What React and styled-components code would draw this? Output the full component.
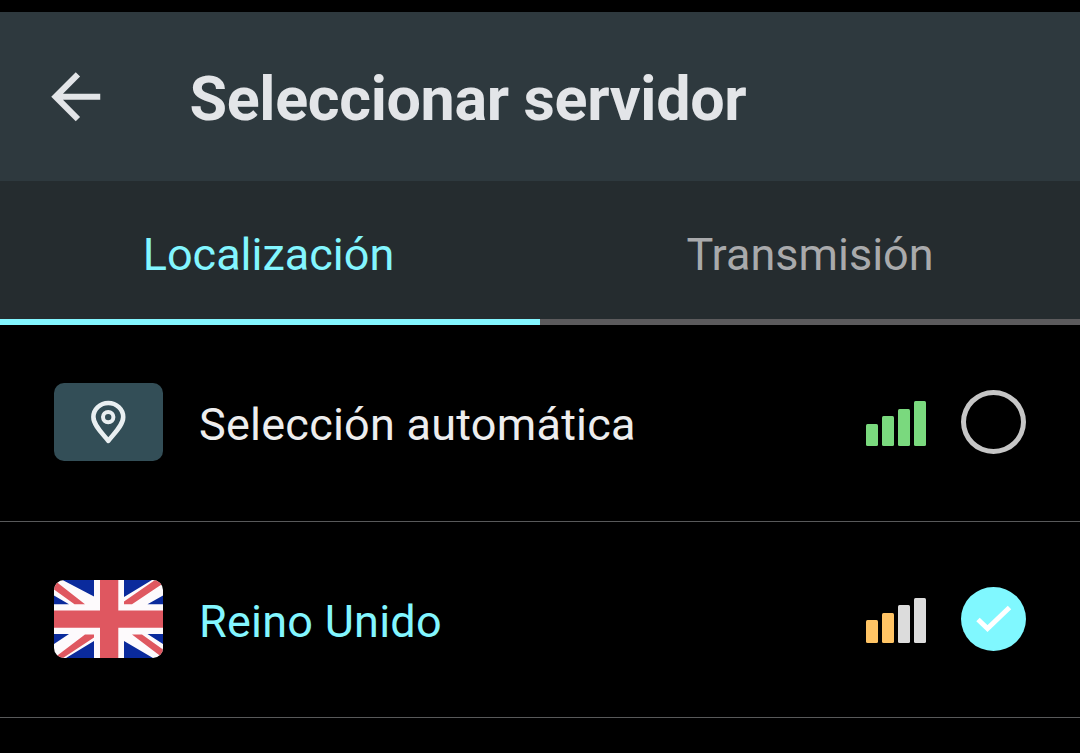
import { createContext, useContext, useState } from "react";
import styled, { createGlobalStyle } from "styled-components";

const GlobalStyle = createGlobalStyle`
  * {
    box-sizing: border-box;
  }

  body {
    margin: 0;
    background: #000;
    font-family: Roboto, "Noto Sans", sans-serif;
    overflow: hidden;
  }

  button {
    border: none;
    background: none;
    padding: 0;
    font: inherit;
    color: inherit;
  }

  svg {
    display: block;
  }
`;

const Screen = styled.div`
  display: flex;
  flex-direction: column;
  height: 753px;
  padding-top: 12px;
  overflow: hidden;
`;

const Header = styled.header`
  display: flex;
  align-items: center;
  flex: 0 0 169px;
  padding: 0 38.5px;
  background: #2e393e;
`;

const BackButton = styled.button`
  width: 73.5px;
  height: 73.5px;
`;

const Title = styled.h1`
  margin: 5px 0 0 77.5px;
  font-size: 61px;
  line-height: 72px;
  font-weight: 700;
  letter-spacing: -0.33px;
  color: #e3e5e8;
  white-space: nowrap;
`;

const TabBar = styled.nav`
  display: grid;
  grid-template-columns: 1fr 1fr;
  flex: 0 0 144px;
  background: #252c2f;
`;

const Tab = styled.button`
  padding-top: 10px;
  padding-right: ${(props) => (props.$active ? 3 : 0)}px;
  font-size: 45px;
  line-height: 52px;
  color: ${(props) => (props.$active ? "#83f6ff" : "#a9aaac")};
  border-bottom: 6px solid ${(props) => (props.$active ? "#83f6ff" : "#5c5b5d")};
`;

const List = styled.ul`
  margin: 0;
  padding: 0;
  list-style: none;
`;

const Row = styled.li`
  display: flex;
  align-items: center;
  height: ${(props) => props.$height}px;
  padding: 0 54px 2px;
  border-bottom: 1px solid #58595a;
`;

const Badge = styled.div`
  flex: 0 0 109px;
  height: 78px;
  border-radius: 10px;
  overflow: hidden;
  background: ${(props) => props.$color};
`;

const Label = styled.span`
  flex: 1;
  margin-left: 36px;
  padding-top: 6px;
  font-size: 45px;
  line-height: 52px;
  letter-spacing: 0.24px;
  color: ${(props) => (props.$selected ? "#83f6ff" : "#ededee")};
`;

const Bars = styled.div`
  display: flex;
  align-items: flex-end;
  justify-content: space-between;
  width: 61px;
  height: 45px;
  margin: 3px 34.5px 0 0;
`;

const Bar = styled.span`
  width: 12px;
  height: ${(props) => props.$height}px;
  border-radius: 1.5px;
  background: ${(props) => props.$color};
`;

const Radio = styled.span`
  display: flex;
  align-items: center;
  justify-content: center;
  width: 65px;
  height: 64px;
  border-radius: 50%;
  border: ${(props) => (props.$selected ? "none" : "5px solid #c6c6c6")};
  background: ${(props) => (props.$selected ? "#80f8ff" : "transparent")};
`;

const BAR_HEIGHTS = [22.5, 30, 37.5, 45];

const SelectionContext = createContext();

function ArrowIcon() {
  return (
    <svg width="73.5" height="73.5" viewBox="0 0 24 24" fill="#e3e5e8">
      <path d="M20 11H7.83l5.59-5.59L12 4l-8 8 8 8 1.41-1.41L7.83 13H20v-2z" />
    </svg>
  );
}

function PinIcon() {
  return (
    <svg width="109" height="78" viewBox="0 0 109 78" fill="none" stroke="#e9eff1">
      <path
        d="M54.3 57.8C49 50.8 39.4 42.500 39.4 34a14.900 14 0 0 1 29.800 0C69.200 42.500 59.600 50.8 54.3 57.8Z"
        strokeWidth="4.6"
        strokeLinejoin="round"
      />
      <circle cx="54.2" cy="34.1" r="5.2" strokeWidth="4" />
    </svg>
  );
}

function UkFlag() {
  return (
    <svg width="109" height="78" viewBox="0 0 109 78">
      <path
        fill="#0a2a9c"
        d="M8.500 0H40V16.500ZM0 15.500L15 24.300H0ZM70 0H98L70 17ZM109 15.500V24.300H93.500ZM0 54H15L0 64ZM40 61V78H12ZM93.500 54H109V64ZM70 61V78H99Z"
      />
      <path
        fill="#df5760"
        d="M0 0L31 24.300H20.500L0 9.500ZM70 21.500L101 0H109V3.500L78 24.300H70ZM31 54.500H40V57.500L9 78H0ZM78 54.500H88L109 69.500V78Z"
      />
      <path fill="#df5760" d="M0 30.500H46V0H64.300V30.500H109V47.800H64.300V78H46V47.800H0Z" />
    </svg>
  );
}

function CheckIcon() {
  return (
    <svg width="65" height="64" viewBox="0 0 65 64" fill="none">
      <path d="M17 32.500L26.500 41.500L48.500 20.500" stroke="#fff" strokeWidth="5" />
    </svg>
  );
}

function Signal({ level, color }) {
  return (
    <Bars>
      {BAR_HEIGHTS.map((height, i) => (
        <Bar key={height} $height={height} $color={i < level ? color : "#dcdcdc"} />
      ))}
    </Bars>
  );
}

function ServerRow({ server }) {
  const { selected, setSelected } = useContext(SelectionContext);
  const isSelected = selected === server.id;

  return (
    <Row $height={server.height} onClick={() => setSelected(server.id)}>
      <Badge $color={server.badge}>{server.icon}</Badge>
      <Label $selected={isSelected}>{server.name}</Label>
      <Signal level={server.level} color={server.color} />
      <Radio $selected={isSelected}>{isSelected && <CheckIcon />}</Radio>
    </Row>
  );
}

const servers = [
  {
    id: "auto",
    name: "Selección automática",
    icon: <PinIcon />,
    badge: "#334e57",
    level: 4,
    color: "#7ad97e",
    height: 197,
  },
  {
    id: "uk",
    name: "Reino Unido",
    icon: <UkFlag />,
    badge: "#fdfafc",
    level: 2,
    color: "#ffc465",
    height: 196,
  },
];

export default function App() {
  const [tab, setTab] = useState("Localización");
  const [selected, setSelected] = useState("uk");

  return (
    <SelectionContext.Provider value={{ selected, setSelected }}>
      <GlobalStyle />
      <Screen>
        <Header>
          <BackButton aria-label="Atrás">
            <ArrowIcon />
          </BackButton>
          <Title>Seleccionar servidor</Title>
        </Header>
        <TabBar>
          {["Localización", "Transmisión"].map((name) => (
            <Tab key={name} $active={tab === name} onClick={() => setTab(name)}>
              {name}
            </Tab>
          ))}
        </TabBar>
        <List>
          {servers.map((server) => (
            <ServerRow key={server.id} server={server} />
          ))}
        </List>
      </Screen>
    </SelectionContext.Provider>
  );
}
